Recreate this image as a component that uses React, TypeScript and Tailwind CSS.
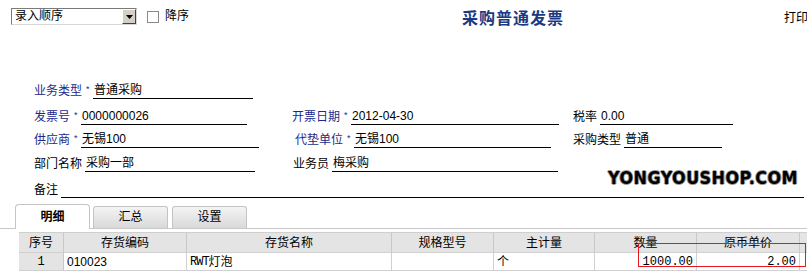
import React from "react";

const cjk = '"Liberation Sans", "Noto Sans CJK SC", sans-serif';

interface FieldProps {
  label: string;
  value?: string;
  blue?: boolean;
  star?: boolean;
  width: number;
  offset?: number;
}

function Field({ label, value, blue, star, width, offset = 0 }: FieldProps) {
  return (
    <div className="flex items-end h-full" style={{ marginLeft: offset }}>
      <span className={`text-[12px] leading-[16px] whitespace-nowrap ${blue ? "text-[#1c2a8a]" : "text-black"}`}>
        {label}
      </span>
      {star ? (
        <span className="w-[11px] text-[9px] leading-[9px] text-[#1c2a8a] pl-[4px] mb-[5px]">*</span>
      ) : (
        <span className="w-[3px]" />
      )}
      <div
        className="h-[17px] border-b border-black text-[12px] leading-[16px] pl-[1px] text-black whitespace-nowrap"
        style={{ width }}
      >
        {value}
      </div>
    </div>
  );
}

const cols = [
  { name: "序号", w: 45 },
  { name: "存货编码", w: 123 },
  { name: "存货名称", w: 205 },
  { name: "规格型号", w: 102 },
  { name: "主计量", w: 101 },
  { name: "数量", w: 102 },
  { name: "原币单价", w: 103 },
  { name: "", w: 20 },
];

const mono = { fontFamily: '"Liberation Mono", monospace' };

export default function App() {
  return (
    <div
      className="relative w-[807px] h-[271px] overflow-hidden bg-white"
      style={{ fontFamily: cjk }}
    >
      <div className="flex h-full">
        <div className="w-[1px] bg-white" />
        <div className="w-[2px] bg-[#5f5f5f]" />
        <div className="flex-1 flex flex-col">
          {/* top bar */}
          <div className="flex items-start h-[84px] pt-[8px]">
            <div className="ml-[11px] w-[126px] h-[17px] border border-[#7a7a7a] border-r-[#d8d8d8] border-b-[#d8d8d8] flex items-center bg-white">
              <span className="flex-1 text-[12px] leading-[15px] pl-[3px] text-black">录入顺序</span>
              <div className="w-[14px] h-[15px] bg-[#d4d0c8] border border-t-white border-l-white border-r-[#404040] border-b-[#404040] flex items-center justify-center">
                <svg width="7" height="4" viewBox="0 0 7 4">
                  <path d="M0 0h7L3.5 4z" fill="#000" />
                </svg>
              </div>
            </div>
            <div className="ml-[10px] mt-[3px] w-[12px] h-[12px] border border-[#8a8a8a] bg-white" />
            <span className="ml-[6px] text-[12px] leading-[17px] text-black">降序</span>
            <span className="ml-[273px] mt-[2px] text-[16px] leading-[18px] font-bold text-[#1c3a84] tracking-[1px]">
              采购普通发票
            </span>
            <span className="ml-[220px] mt-[2px] text-[12px] leading-[17px] text-black whitespace-nowrap">打印</span>
          </div>

          {/* form */}
          <div className="flex flex-col">
            <div className="flex h-[17px] -mt-[1px]">
              <div className="w-[292px] pl-[34px]">
                <Field label="业务类型" star blue value="普通采购" width={160} />
              </div>
            </div>
            <div className="flex h-[26px]">
              <div className="w-[292px] pl-[34px]">
                <Field label="发票号" star blue value="0000000026" width={166} />
              </div>
              <div className="w-[281px]">
                <Field label="开票日期" star blue value="2012-04-30" width={208} />
              </div>
              <div>
                <Field label="税率" value="0.00" width={133} />
              </div>
            </div>
            <div className="flex h-[23px]">
              <div className="w-[292px] pl-[34px]">
                <Field label="供应商" star blue value="无锡100" width={178} />
              </div>
              <div className="w-[281px]">
                <Field label="代垫单位" star blue value="无锡100" width={197} offset={3} />
              </div>
              <div>
                <Field label="采购类型" value="普通" width={98} />
              </div>
            </div>
            <div className="flex h-[24px]">
              <div className="w-[292px] pl-[34px]">
                <Field label="部门名称" value="采购一部" width={170} />
              </div>
              <div className="w-[281px]">
                <Field label="业务员" value="梅采购" width={226} offset={1} />
              </div>
            </div>
            <div className="flex h-[26px]">
              <div className="flex-1 pl-[34px]">
                <Field label="备注" value="" width={743} />
              </div>
            </div>
          </div>

          {/* tabs */}
          <div className="flex items-end h-[32px] pl-[15px] border-b border-[#c9c9c9]">
            <div className="w-[75px] h-[25px] -mb-[1px] bg-white border border-b-0 border-[#c4c4c4] rounded-t-[4px] flex items-center justify-center text-[12px] font-bold text-black">
              明细
            </div>
            <div className="ml-[3px] w-[75px] h-[22px] bg-gradient-to-b from-[#f4f4f4] to-[#d9d9d9] border border-b-0 border-[#c4c4c4] rounded-t-[3px] flex items-end justify-center pb-[2px] text-[12px] text-black">
              汇总
            </div>
            <div className="ml-[4px] w-[75px] h-[22px] bg-gradient-to-b from-[#f4f4f4] to-[#d9d9d9] border border-b-0 border-[#c4c4c4] rounded-t-[3px] flex items-end justify-center pb-[2px] text-[12px] text-black">
              设置
            </div>
          </div>

          {/* table */}
          <div className="pl-[19px] pt-[3px]">
            <div className="flex h-[20px] bg-[#e4e4e4] border-t border-[#cfcfcf]">
              {cols.map((c, i) => (
                <div
                  key={i}
                  className="shrink-0 border-r border-[#c8c8c8] flex items-center justify-center text-[12px] text-black"
                  style={{ width: c.w }}
                >
                  {c.name}
                </div>
              ))}
            </div>
            <div className="flex h-[19px] border-t border-b border-[#d0d0d0] text-[12px] text-black">
              <div className="shrink-0 w-[45px] bg-[#e4e4e4] border-r border-[#c8c8c8] flex items-center justify-center" style={mono}>
                1
              </div>
              <div className="shrink-0 w-[123px] border-r border-[#d0d0d0] flex items-center pl-[3px]" style={{ fontFamily: '"Liberation Sans", sans-serif' }}>
                010023
              </div>
              <div className="shrink-0 w-[205px] border-r border-[#d0d0d0] flex items-center pl-[3px]">
                <span style={{ fontFamily: '"Liberation Mono", "Noto Sans CJK SC", monospace' }} className="tracking-[-1px]">RWT</span>
                <span>灯泡</span>
              </div>
              <div className="shrink-0 w-[102px] border-r border-[#d0d0d0]" />
              <div className="shrink-0 w-[101px] border-r border-[#d0d0d0] flex items-center pl-[3px]">个</div>
              <div className="shrink-0 w-[102px] border-r border-[#d0d0d0] flex items-center justify-end pr-[3px]" style={mono}>
                1000.00
              </div>
              <div className="shrink-0 w-[103px] border-r border-[#d0d0d0] flex items-center justify-end pr-[3px]" style={mono}>
                2.00
              </div>
              <div className="shrink-0 w-[20px]" />
            </div>
          </div>
        </div>
      </div>

      {/* watermark */}
      <div
        className="absolute left-[608px] top-[168px] text-[18px] leading-[20px] font-black text-black tracking-[0.5px]"
        style={{
          fontFamily: '"DejaVu Sans", sans-serif',
          textShadow: "1px 0 #9a9a9a, -1px 0 #9a9a9a, 0 1px #9a9a9a, 0 -1px #9a9a9a",
          transform: "scaleX(0.89)",
          transformOrigin: "left",
        }}
      >
        YONGYOUSHOP.COM
      </div>

      {/* red highlight */}
      <div className="absolute left-[638px] top-[243px] w-[168px] h-[24px] border border-[#e8141e]" />
    </div>
  );
}
